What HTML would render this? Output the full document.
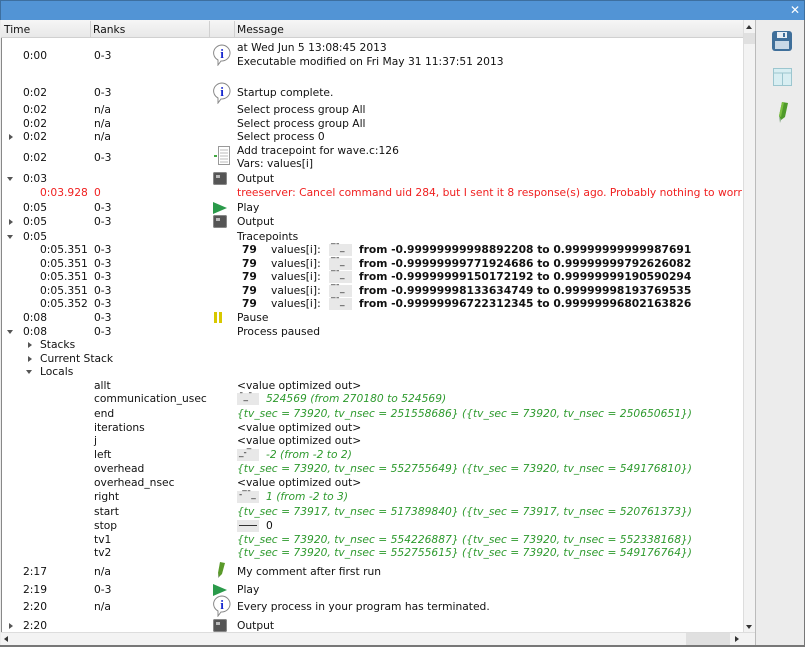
<!DOCTYPE html>
<html><head><meta charset="utf-8"><style>
*{margin:0;padding:0;box-sizing:border-box}
body{width:805px;height:647px;overflow:hidden;background:#ececec;font-family:"DejaVu Sans","Liberation Sans",sans-serif;font-size:10.7px;color:#111;position:relative}
.a{position:absolute;white-space:nowrap;line-height:14px}
.t{left:23px}.s{left:40px}.r{left:94px}.m{left:237px}
.g{color:#2e9a2e;font-style:italic}
.red{color:#f02020}
.b{font-weight:bold}
.spark{position:absolute;background:#e8e8e8;height:12px}
.tri{position:absolute;width:0;height:0}
.tr{border-left:4px solid #555;border-top:3px solid transparent;border-bottom:3px solid transparent}
.td{border-top:4px solid #555;border-left:3px solid transparent;border-right:3px solid transparent}
.out{position:absolute;width:14px;height:13px;background:#555;border-radius:2px;box-shadow:inset 0 0 0 1px #888}
.out:after{content:"";position:absolute;left:3px;top:3px;width:4px;height:3px;background:#bbb}
#rows{position:absolute;left:0;top:1px;width:805px;height:0}
</style></head><body>
<div style="position:absolute;left:0;top:0;width:805px;height:20px;background:#5294d5;border:1px solid #3d6f9f;border-bottom:none"></div>
<div class="a" style="left:790px;top:3px;color:#fff;font-size:12px">✕</div>
<div style="position:absolute;left:1px;top:20px;width:755px;height:626px;background:#fff;border-left:1px solid #888"></div>
<div style="position:absolute;left:1px;top:20px;width:742px;height:18px;background:linear-gradient(#f6f6f6,#e8e8e8);border-bottom:1px solid #d0d0d0"></div>
<div style="position:absolute;left:90px;top:21px;width:1px;height:17px;background:#d0d0d0"></div>
<div style="position:absolute;left:209px;top:21px;width:1px;height:17px;background:#d0d0d0"></div>
<div style="position:absolute;left:234px;top:21px;width:1px;height:17px;background:#d0d0d0"></div>
<div class="a" style="left:4px;top:23px">Time</div>
<div class="a" style="left:93px;top:23px">Ranks</div>
<div class="a" style="left:237px;top:23px">Message</div>
<div style="position:absolute;left:743px;top:20px;width:12px;height:612px;background:#f3f3f3;border-left:1px solid #ddd"></div>
<div style="position:absolute;left:744px;top:33px;width:11px;height:11px;background:#e0e0e0"></div>
<div class="tri" style="left:746px;top:25px;border-bottom:4px solid #333;border-left:3px solid transparent;border-right:3px solid transparent"></div>
<div class="tri" style="left:746px;top:625px;border-top:4px solid #333;border-left:3px solid transparent;border-right:3px solid transparent"></div>
<div style="position:absolute;left:1px;top:632px;width:754px;height:13px;background:#f3f3f3;border-top:1px solid #ddd"></div>
<div style="position:absolute;left:686px;top:633px;width:44px;height:12px;background:#e0e0e0"></div>
<div class="tri" style="left:4px;top:636px;border-right:4px solid #333;border-top:3px solid transparent;border-bottom:3px solid transparent"></div>
<div class="tri" style="left:735px;top:636px;border-left:4px solid #333;border-top:3px solid transparent;border-bottom:3px solid transparent"></div>
<div style="position:absolute;left:755px;top:20px;width:1px;height:627px;background:#bbb"></div>
<div style="position:absolute;left:0;top:645px;width:805px;height:2px;background:#777"></div>
<div style="position:absolute;left:804px;top:20px;width:1px;height:627px;background:#777"></div>
<svg style="position:absolute;left:771px;top:30px" width="22" height="22" viewBox="0 0 22 22"><rect x="1" y="1" width="20" height="20" rx="3" fill="#3f6f9a"/><rect x="4" y="11" width="14" height="8" fill="#c8d8e6"/><rect x="6" y="2" width="10" height="6" fill="#e8eef4"/><rect x="12" y="3" width="2" height="4" fill="#3f6f9a"/></svg>
<svg style="position:absolute;left:773px;top:68px" width="19" height="18" viewBox="0 0 19 18"><rect x="0.5" y="0.5" width="18" height="17" fill="#d8eef2" stroke="#9cc6cf"/><line x1="1" y1="5" x2="18" y2="5" stroke="#9cc6cf"/><line x1="9.5" y1="5" x2="9.5" y2="17" stroke="#9cc6cf"/></svg>
<svg style="position:absolute;left:776px;top:100px" width="14" height="24" viewBox="0 0 14 24"><path d="M6 2 L12 3 L9 17 L5 20 L3 16 Z" fill="#4f9a2a"/><path d="M3 16 L5 20 L4 23 Z" fill="#8a8"/><path d="M6 2 L8 2.5 L5 17 L3 16Z" fill="#7cc040"/></svg>
<div id="rows">
<div class="a m" style="top:40px">at Wed Jun 5 13:08:45 2013</div>
<div class="a t" style="top:48px">0:00</div><div class="a r" style="top:48px">0-3</div>
<div class="a m" style="top:54px">Executable modified on Fri May 31 11:37:51 2013</div>
<svg style="position:absolute;left:212px;top:43px" width="20" height="22" viewBox="0 0 20 22"><path d="M10 1 A8.5 8 0 1 1 9 17 L6 21 L6 16 A8.5 8 0 0 1 10 1Z" fill="#fff" stroke="#888"/><text x="10" y="14" text-anchor="middle" font-family="Liberation Serif" font-weight="bold" font-size="13" fill="#1a2ad0">i</text></svg>
<div class="a t" style="top:85px">0:02</div><div class="a r" style="top:85px">0-3</div><div class="a m" style="top:85px">Startup complete.</div>
<svg style="position:absolute;left:212px;top:81px" width="20" height="22" viewBox="0 0 20 22"><path d="M10 1 A8.5 8 0 1 1 9 17 L6 21 L6 16 A8.5 8 0 0 1 10 1Z" fill="#fff" stroke="#888"/><text x="10" y="14" text-anchor="middle" font-family="Liberation Serif" font-weight="bold" font-size="13" fill="#1a2ad0">i</text></svg>
<div class="a t" style="top:102px">0:02</div><div class="a r" style="top:102px">n/a</div><div class="a m" style="top:102px">Select process group All</div>
<div class="a t" style="top:116px">0:02</div><div class="a r" style="top:116px">n/a</div><div class="a m" style="top:116px">Select process group All</div>
<div class="tri tr" style="left:9px;top:133px"></div>
<div class="a t" style="top:129px">0:02</div><div class="a r" style="top:129px">n/a</div><div class="a m" style="top:129px">Select process 0</div>
<div class="a m" style="top:143px">Add tracepoint for wave.c:126</div>
<div class="a t" style="top:150px">0:02</div><div class="a r" style="top:150px">0-3</div>
<div class="a m" style="top:156px">Vars: values[i]</div>
<svg style="position:absolute;left:213px;top:145px" width="18" height="20" viewBox="0 0 18 20"><rect x="5.5" y="0.5" width="11" height="18" fill="#fff" stroke="#999"/><path d="M7 4h8M7 7h8M7 10h8M7 13h8M7 16h8" stroke="#bbb"/><path d="M1 10h3" stroke="#4a4" stroke-width="2"/></svg>
<div class="tri td" style="left:7px;top:176px"></div>
<div class="a t" style="top:171px">0:03</div><div class="a m" style="top:171px">Output</div>
<div class="out" style="left:213px;top:171px"></div>
<div class="a s red" style="top:185px">0:03.928</div><div class="a r red" style="top:185px">0</div>
<div class="a m red" style="top:185px">treeserver: Cancel command uid 284, but I sent it 8 response(s) ago. Probably nothing to worr</div>
<div class="a t" style="top:200px">0:05</div><div class="a r" style="top:200px">0-3</div><div class="a m" style="top:200px">Play</div>
<svg style="position:absolute;left:213px;top:201px" width="14" height="12"><path d="M0 0 L14 6 L0 12 Z" fill="#2a9a4a"/></svg>
<div class="tri tr" style="left:9px;top:218px"></div>
<div class="a t" style="top:214px">0:05</div><div class="a r" style="top:214px">0-3</div><div class="a m" style="top:214px">Output</div>
<div class="out" style="left:213px;top:214px"></div>
<div class="tri td" style="left:7px;top:234px"></div>
<div class="a t" style="top:229px">0:05</div><div class="a m" style="top:229px">Tracepoints</div>

<div class="a s" style="top:242px">0:05.351</div><div class="a r" style="top:242px">0-3</div><div class="a b" style="left:242px;top:242px">79</div><div class="a" style="left:271px;top:242px">values[i]:</div><div class="spark" style="left:329px;top:243px;width:23px"></div><div class="a" style="left:331px;top:240px;font-size:9px">‾¯_</div><div class="a b" style="left:359px;top:242px">from -0.99999999998892208 to 0.99999999999987691</div>
<div class="a s" style="top:256px">0:05.351</div><div class="a r" style="top:256px">0-3</div><div class="a b" style="left:242px;top:256px">79</div><div class="a" style="left:271px;top:256px">values[i]:</div><div class="spark" style="left:329px;top:257px;width:23px"></div><div class="a" style="left:331px;top:254px;font-size:9px">‾¯_</div><div class="a b" style="left:359px;top:256px">from -0.99999999771924686 to 0.99999999792626082</div>
<div class="a s" style="top:269px">0:05.351</div><div class="a r" style="top:269px">0-3</div><div class="a b" style="left:242px;top:269px">79</div><div class="a" style="left:271px;top:269px">values[i]:</div><div class="spark" style="left:329px;top:270px;width:23px"></div><div class="a" style="left:331px;top:267px;font-size:9px">‾¯_</div><div class="a b" style="left:359px;top:269px">from -0.99999999150172192 to 0.99999999190590294</div>
<div class="a s" style="top:283px">0:05.351</div><div class="a r" style="top:283px">0-3</div><div class="a b" style="left:242px;top:283px">79</div><div class="a" style="left:271px;top:283px">values[i]:</div><div class="spark" style="left:329px;top:284px;width:23px"></div><div class="a" style="left:331px;top:281px;font-size:9px">‾¯_</div><div class="a b" style="left:359px;top:283px">from -0.99999998133634749 to 0.99999998193769535</div>
<div class="a s" style="top:296px">0:05.352</div><div class="a r" style="top:296px">0-3</div><div class="a b" style="left:242px;top:296px">79</div><div class="a" style="left:271px;top:296px">values[i]:</div><div class="spark" style="left:329px;top:297px;width:23px"></div><div class="a" style="left:331px;top:294px;font-size:9px">‾¯_</div><div class="a b" style="left:359px;top:296px">from -0.99999996722312345 to 0.99999996802163826</div>

<div class="a t" style="top:310px">0:08</div><div class="a r" style="top:310px">0-3</div><div class="a m" style="top:310px">Pause</div>
<div style="position:absolute;left:214px;top:311px;width:3px;height:11px;background:#d8c800"></div><div style="position:absolute;left:219px;top:311px;width:3px;height:11px;background:#d8c800"></div>
<div class="tri td" style="left:7px;top:329px"></div>
<div class="a t" style="top:324px">0:08</div><div class="a r" style="top:324px">0-3</div><div class="a m" style="top:324px">Process paused</div>
<div class="tri tr" style="left:28px;top:341px"></div><div class="a s" style="top:337px">Stacks</div>
<div class="tri tr" style="left:28px;top:355px"></div><div class="a s" style="top:351px">Current Stack</div>
<div class="tri td" style="left:26px;top:369px"></div><div class="a s" style="top:364px">Locals</div>

<div class="a r" style="top:378px">allt</div><div class="a m" style="top:378px">&lt;value optimized out&gt;</div>
<div class="a r" style="top:391px">communication_usec</div><div class="spark" style="left:237px;top:392px;width:22px"></div><div class="a" style="left:239px;top:389px;font-size:9px">¯_¯</div><div class="a g" style="left:266px;top:391px">524569 (from 270180 to 524569)</div>
<div class="a r" style="top:406px">end</div><div class="a m g" style="top:406px">{tv_sec = 73920, tv_nsec = 251558686} ({tv_sec = 73920, tv_nsec = 250650651})</div>
<div class="a r" style="top:420px">iterations</div><div class="a m" style="top:420px">&lt;value optimized out&gt;</div>
<div class="a r" style="top:433px">j</div><div class="a m" style="top:433px">&lt;value optimized out&gt;</div>
<div class="a r" style="top:447px">left</div><div class="spark" style="left:237px;top:448px;width:22px"></div><div class="a" style="left:239px;top:445px;font-size:9px">_-‾</div><div class="a g" style="left:266px;top:447px">-2 (from -2 to 2)</div>
<div class="a r" style="top:461px">overhead</div><div class="a m g" style="top:461px">{tv_sec = 73920, tv_nsec = 552755649} ({tv_sec = 73920, tv_nsec = 549176810})</div>
<div class="a r" style="top:475px">overhead_nsec</div><div class="a m" style="top:475px">&lt;value optimized out&gt;</div>
<div class="a r" style="top:489px">right</div><div class="spark" style="left:237px;top:490px;width:22px"></div><div class="a" style="left:239px;top:487px;font-size:9px">-‾¯_</div><div class="a g" style="left:266px;top:489px">1 (from -2 to 3)</div>
<div class="a r" style="top:504px">start</div><div class="a m g" style="top:504px">{tv_sec = 73917, tv_nsec = 517389840} ({tv_sec = 73917, tv_nsec = 520761373})</div>
<div class="a r" style="top:518px">stop</div><div class="spark" style="left:237px;top:519px;width:22px"></div><div style="position:absolute;left:239px;top:524px;width:18px;height:1px;background:#333"></div><div class="a" style="left:266px;top:518px">0</div>
<div class="a r" style="top:532px">tv1</div><div class="a m g" style="top:532px">{tv_sec = 73920, tv_nsec = 554226887} ({tv_sec = 73920, tv_nsec = 552338168})</div>
<div class="a r" style="top:545px">tv2</div><div class="a m g" style="top:545px">{tv_sec = 73920, tv_nsec = 552755615} ({tv_sec = 73920, tv_nsec = 549176764})</div>

<div class="a t" style="top:564px">2:17</div><div class="a r" style="top:564px">n/a</div><div class="a m" style="top:564px">My comment after first run</div>
<svg style="position:absolute;left:216px;top:560px" width="10" height="18" viewBox="0 0 10 18"><path d="M4 1 L9 2 L6 13 L3 16 L2 12 Z" fill="#5a9a2a"/><path d="M2 12 L3 16 L2 17Z" fill="#898"/></svg>
<div class="a t" style="top:582px">2:19</div><div class="a r" style="top:582px">0-3</div><div class="a m" style="top:582px">Play</div>
<svg style="position:absolute;left:213px;top:583px" width="14" height="12"><path d="M0 0 L14 6 L0 12 Z" fill="#2a9a4a"/></svg>
<div class="a t" style="top:599px">2:20</div><div class="a r" style="top:599px">n/a</div><div class="a m" style="top:599px">Every process in your program has terminated.</div>
<svg style="position:absolute;left:212px;top:594px" width="20" height="22" viewBox="0 0 20 22"><path d="M10 1 A8.5 8 0 1 1 9 17 L6 21 L6 16 A8.5 8 0 0 1 10 1Z" fill="#fff" stroke="#888"/><text x="10" y="14" text-anchor="middle" font-family="Liberation Serif" font-weight="bold" font-size="13" fill="#1a2ad0">i</text></svg>
<div class="tri tr" style="left:9px;top:622px"></div>
<div class="a t" style="top:618px">2:20</div><div class="a m" style="top:618px">Output</div>
<div class="out" style="left:213px;top:618px"></div>
</div>
</body></html>
